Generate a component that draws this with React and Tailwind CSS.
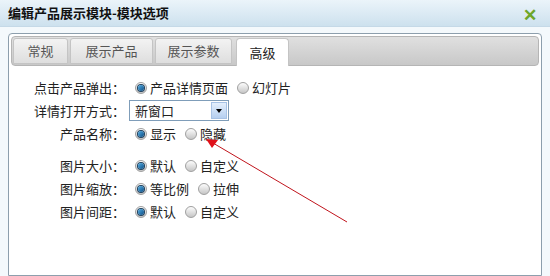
import React from "react";

const font = { fontFamily: '"Noto Sans CJK SC", "Liberation Sans", sans-serif' };

function Radio({ checked, className = "" }) {
    return (
        <span className={`inline-flex w-[12px] h-[12px] rounded-full border border-[#a0a0a0] bg-gradient-to-b from-[#fdfdfd] to-[#c6c6c6] items-center justify-center shrink-0 ${className}`}>
            {checked && <span className="w-[6px] h-[6px] rounded-full bg-gradient-to-br from-[#54b0e6] to-[#0c4f86] ring-1 ring-[#1d3f5c]" />}
        </span>
    );
}

function Row({ label, children, className = "" }) {
    return (
        <div className={`flex items-center h-[23px] ${className}`}>
            <div className="w-[114px] text-right whitespace-nowrap text-[13px] text-[#222]">{label}</div>
            <div className="flex items-center pl-[10px] text-[13px] text-[#222]">{children}</div>
        </div>
    );
}

function Opt({ checked, text, first }) {
    return (
        <>
            <Radio checked={checked} className={first ? "" : "ml-[9px]"} />
            <span className="ml-[3px]">{text}</span>
        </>
    );
}

export default function App() {
    const tabs = [["常规", "w-[55px]"], ["展示产品", "w-[83px]"], ["展示参数", "w-[77px]"]];
    return (
        <div style={font} className="relative w-[550px] h-[276px] bg-[#eef5fa] overflow-hidden">
            <div className="h-[27px] flex items-center justify-between pl-[8px] pr-[13px] bg-gradient-to-b from-[#ebf4fa] to-[#cde1ee] border-b border-[#c5d9e7]">
                <span className="text-[13px] font-bold text-[#111]">编辑产品展示模块-模块选项</span>
                <span className="text-[#6ea629] font-bold text-[17px] leading-none">✕</span>
            </div>
            <div className="px-[8px] pt-[6px] h-[249px] bg-[#f4f9fc]">
                <div className="h-full border border-[#8d9fad] rounded-t-[4px] bg-white p-[2px]">
                    <div className="h-[30px] rounded-[4px] bg-gradient-to-b from-[#e0e0e0] to-[#c8c8c8] border border-[#b5b5b5] flex items-end pl-[1px] gap-[2px]">
                        {tabs.map(([t, w]) => (
                            <div key={t} className={`${w} h-[26px] mb-[1px] flex items-center justify-center rounded-t-[3px] border border-[#c4c4c4] bg-gradient-to-b from-[#f3f3f3] to-[#dedede] text-[13px] text-[#555]`}>{t}</div>
                        ))}
                        <div className="w-[53px] h-[28px] -mb-[1px] ml-[2px] flex items-center justify-center rounded-t-[4px] border border-b-0 border-[#c4c4c4] bg-white text-[13px] text-[#222]">高级</div>
                    </div>
                    <div className="pt-[10px]">
                        <Row label="点击产品弹出：">
                            <Opt first checked text="产品详情页面" />
                            <Opt text="幻灯片" />
                        </Row>
                        <Row label="详情打开方式：">
                            <div className="-ml-[6px] w-[100px] h-[21px] border border-[#7f9db9] bg-white flex items-center justify-between">
                                <span className="pl-[5px]">新窗口</span>
                                <span className="w-[16px] h-[17px] mr-[1px] bg-gradient-to-b from-[#e4effc] to-[#b5cff0] border border-[#a7c2e5] flex items-center justify-center">
                                    <span className="w-0 h-0 border-l-[3px] border-r-[3px] border-t-[4px] border-l-transparent border-r-transparent border-t-black" />
                                </span>
                            </div>
                        </Row>
                        <Row label="产品名称：">
                            <Opt first checked text="显示" />
                            <Opt text="隐藏" />
                        </Row>
                        <Row label="图片大小：" className="mt-[9px]">
                            <Opt first checked text="默认" />
                            <Opt text="自定义" />
                        </Row>
                        <Row label="图片缩放：">
                            <Opt first checked text="等比例" />
                            <Opt text="拉伸" />
                        </Row>
                        <Row label="图片间距：">
                            <Opt first checked text="默认" />
                            <Opt text="自定义" />
                        </Row>
                    </div>
                </div>
            </div>
            <svg className="absolute left-0 top-0 pointer-events-none" width="550" height="276">
                <line x1="347" y1="222" x2="213" y2="143" stroke="#c0141c" strokeWidth="1" />
                <polygon points="206,139 218,140 212,148" fill="#e0101a" />
            </svg>
        </div>
    );
}
